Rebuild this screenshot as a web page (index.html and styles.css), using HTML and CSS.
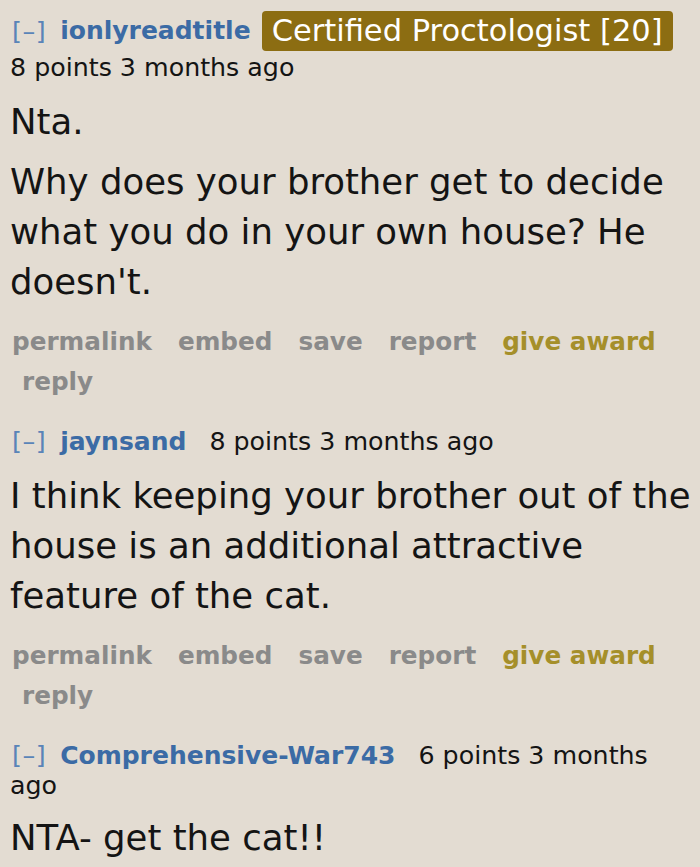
FILE: index.html
```html
<!DOCTYPE html>
<html>
<head>
<meta charset="utf-8">
<link rel="stylesheet" href="styles.css">
</head>
<body>
<div class="thread">
  <div class="comment">
    <div class="tagline tagline-first"><span class="expand">[–]</span><span class="author">ionlyreadtitle</span><span class="flair">Certified Proctologist [20]</span></div>
    <div class="score-line">8 points 3 months ago</div>
    <div class="body">
      <p class="para">Nta.</p>
      <p class="para">Why does your brother get to decide what you do in your own house? He doesn't.</p>
    </div>
    <ul class="buttons">
      <li class="btn">permalink</li>
      <li class="btn">embed</li>
      <li class="btn">save</li>
      <li class="btn">report</li>
      <li class="btn award">give award</li>
      <li class="btn reply">reply</li>
    </ul>
  </div>

  <div class="comment">
    <div class="tagline"><span class="expand">[–]</span><span class="author">jaynsand</span><span class="score">8 points 3 months ago</span></div>
    <div class="body">
      <p class="para">I think keeping your brother out of the house is an additional attractive feature of the cat.</p>
    </div>
    <ul class="buttons">
      <li class="btn">permalink</li>
      <li class="btn">embed</li>
      <li class="btn">save</li>
      <li class="btn">report</li>
      <li class="btn award">give award</li>
      <li class="btn reply">reply</li>
    </ul>
  </div>

  <div class="comment comment-last">
    <div class="tagline"><span class="expand">[–]</span><span class="author">Comprehensive-War743</span><span class="score">6 points 3 months</span> <span class="score-tail">ago</span></div>
    <div class="body">
      <p class="para">NTA- get the cat!!</p>
    </div>
  </div>
</div>
</body>
</html>
```

FILE: styles.css
```css
html, body {
  margin: 0;
  padding: 0;
  background: #e3dcd2;
}

body {
  font-family: "DejaVu Sans", Verdana, sans-serif;
  color: #141414;
}

.thread {
  padding: 0 4px 0 10px;
}

.comment + .comment {
  margin-top: 24px;
}

.tagline {
  font-size: 25px;
  line-height: 30px;
}

.tagline-first {
  display: flex;
  align-items: center;
  height: 40px;
  margin-top: 11px;
}

.expand {
  color: #5a84b8;
  font-size: 25.5px;
  letter-spacing: 0.5px;
  margin-left: 2px;
  margin-right: 14px;
}

.author {
  color: #3b6ba5;
  font-weight: bold;
  font-size: 25px;
}

.score {
  margin-left: 23px;
  font-size: 25.3px;
}

.score-tail {
  font-size: 25.3px;
}

.flair {
  background: #8c6d12;
  color: #fff;
  border-radius: 4px;
  font-size: 30.5px;
  line-height: 40px;
  padding: 0 10px;
  margin-left: 11px;
}

.score-line {
  font-size: 25.3px;
  line-height: 30px;
  margin-top: 2px;
}

.body {
  font-size: 35.5px;
  line-height: 50px;
  margin-top: 14px;
}

.comment-last .body {
  margin-top: 12px;
}

.para {
  margin: 0;
}

.para + .para {
  margin-top: 10px;
}

.buttons {
  list-style: none;
  margin: 15px 0 0 0;
  padding: 0 0 0 2px;
  display: flex;
  flex-wrap: wrap;
  column-gap: 26px;
  font-size: 24.7px;
  line-height: 40px;
  font-weight: bold;
}

.btn {
  color: #8a8a8a;
}

.award {
  color: #a58f2a;
}

.reply {
  margin-left: 10px;
}
```
